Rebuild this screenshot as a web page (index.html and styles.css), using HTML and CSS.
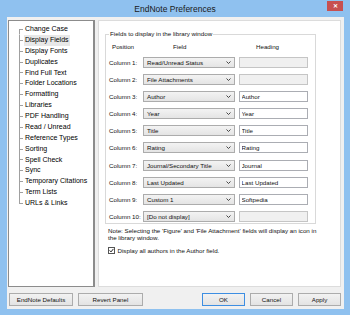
FILE: index.html
```html
<!DOCTYPE html>
<html lang="en">
<head>
    <meta charset="UTF-8">
    <meta name="viewport" content="width=device-width, initial-scale=1.0">
    <title>EndNote Preferences</title>
    <link rel="stylesheet" href="styles.css">
</head>
<body>

<div class="window">
    <div class="titlebar">
        <span></span>
        <span class="title">EndNote Preferences</span>
        <button class="close">&#x2715;</button>
    </div>

    <div class="client">
        <div class="main">
            <ul class="tree">
                <li><span>Change Case</span></li>
                <li class="sel"><span>Display Fields</span></li>
                <li><span>Display Fonts</span></li>
                <li><span>Duplicates</span></li>
                <li><span>Find Full Text</span></li>
                <li><span>Folder Locations</span></li>
                <li><span>Formatting</span></li>
                <li><span>Libraries</span></li>
                <li><span>PDF Handling</span></li>
                <li><span>Read / Unread</span></li>
                <li><span>Reference Types</span></li>
                <li><span>Sorting</span></li>
                <li><span>Spell Check</span></li>
                <li><span>Sync</span></li>
                <li><span>Temporary Citations</span></li>
                <li><span>Term Lists</span></li>
                <li><span>URLs &amp; Links</span></li>
            </ul>

            <div class="panel">
                <fieldset class="fields">
                    <legend>Fields to display in the library window</legend>
                    <div class="cols-head">
                        <span class="h-pos">Position</span>
                        <span class="h-field">Field</span>
                        <span class="h-head">Heading</span>
                    </div>
                    <div class="cols">
                        <span class="lbl">Column 1:</span>
                        <div class="select"><span>Read/Unread Status</span><svg width="5" height="3" viewBox="0 0 5 3"><polyline points="0.5,0.5 2.5,2.5 4.5,0.5" fill="none" stroke="#333" stroke-width="0.9"/></svg></div>
                        <input type="text" disabled>

                        <span class="lbl">Column 2:</span>
                        <div class="select"><span>File Attachments</span><svg width="5" height="3" viewBox="0 0 5 3"><polyline points="0.5,0.5 2.5,2.5 4.5,0.5" fill="none" stroke="#333" stroke-width="0.9"/></svg></div>
                        <input type="text" disabled>

                        <span class="lbl">Column 3:</span>
                        <div class="select"><span>Author</span><svg width="5" height="3" viewBox="0 0 5 3"><polyline points="0.5,0.5 2.5,2.5 4.5,0.5" fill="none" stroke="#333" stroke-width="0.9"/></svg></div>
                        <input type="text" value="Author">

                        <span class="lbl">Column 4:</span>
                        <div class="select"><span>Year</span><svg width="5" height="3" viewBox="0 0 5 3"><polyline points="0.5,0.5 2.5,2.5 4.5,0.5" fill="none" stroke="#333" stroke-width="0.9"/></svg></div>
                        <input type="text" value="Year">

                        <span class="lbl">Column 5:</span>
                        <div class="select"><span>Title</span><svg width="5" height="3" viewBox="0 0 5 3"><polyline points="0.5,0.5 2.5,2.5 4.5,0.5" fill="none" stroke="#333" stroke-width="0.9"/></svg></div>
                        <input type="text" value="Title">

                        <span class="lbl">Column 6:</span>
                        <div class="select"><span>Rating</span><svg width="5" height="3" viewBox="0 0 5 3"><polyline points="0.5,0.5 2.5,2.5 4.5,0.5" fill="none" stroke="#333" stroke-width="0.9"/></svg></div>
                        <input type="text" value="Rating">

                        <span class="lbl">Column 7:</span>
                        <div class="select"><span>Journal/Secondary Title</span><svg width="5" height="3" viewBox="0 0 5 3"><polyline points="0.5,0.5 2.5,2.5 4.5,0.5" fill="none" stroke="#333" stroke-width="0.9"/></svg></div>
                        <input type="text" value="Journal">

                        <span class="lbl">Column 8:</span>
                        <div class="select"><span>Last Updated</span><svg width="5" height="3" viewBox="0 0 5 3"><polyline points="0.5,0.5 2.5,2.5 4.5,0.5" fill="none" stroke="#333" stroke-width="0.9"/></svg></div>
                        <input type="text" value="Last Updated">

                        <span class="lbl">Column 9:</span>
                        <div class="select"><span>Custom 1</span><svg width="5" height="3" viewBox="0 0 5 3"><polyline points="0.5,0.5 2.5,2.5 4.5,0.5" fill="none" stroke="#333" stroke-width="0.9"/></svg></div>
                        <input type="text" value="Softpedia">

                        <span class="lbl">Column 10:</span>
                        <div class="select"><span>[Do not display]</span><svg width="5" height="3" viewBox="0 0 5 3"><polyline points="0.5,0.5 2.5,2.5 4.5,0.5" fill="none" stroke="#333" stroke-width="0.9"/></svg></div>
                        <input type="text" disabled>
                    </div>
                </fieldset>

                <p class="note">Note: Selecting the 'Figure' and 'File Attachment' fields will display an icon in the library window.</p>

                <label class="check">
                    <span class="box"><svg width="5" height="5" viewBox="0 0 5 5"><polyline points="0.6,2.4 2,3.9 4.4,0.9" fill="none" stroke="#222" stroke-width="1"/></svg></span>
                    Display all authors in the Author field.
                </label>
            </div>
        </div>

        <div class="buttons">
            <button class="btn-defaults">EndNote Defaults</button>
            <button class="btn-revert">Revert Panel</button>
            <span class="spacer"></span>
            <button class="btn default">OK</button>
            <button class="btn">Cancel</button>
            <button class="btn">Apply</button>
        </div>
    </div>
</div>

</body>
</html>
```

FILE: styles.css
```css
* {
    box-sizing: border-box;
}
body {
    margin: 0;
    font-family: "Liberation Sans", Arial, sans-serif;
    color: #111;
}
.window {
    width: 350px;
    height: 315px;
    background: #8fc1ef;
}

/* title bar */
.titlebar {
    height: 17px;
    display: grid;
    grid-template-columns: 1fr auto 1fr;
    grid-template-rows: 17px;
}
.title {
    font-size: 8.5px;
    line-height: 19px;
    color: #1a1a1a;
}
.close {
    justify-self: end;
    align-self: start;
    width: 16px;
    height: 10px;
    margin: 1px 7px 0 0;
    padding: 0;
    border: none;
    background: #c75050;
    color: #fff;
    font-size: 6px;
    line-height: 10px;
    font-weight: bold;
}

/* dialog body */
.client {
    margin: 0 6px 0 7px;
    height: 292px;
    background: #f0f0f0;
    padding: 3px 3px 0 1px;
}
.main {
    display: flex;
    gap: 3px;
    height: 267px;
}

/* left tree */
.tree {
    width: 87px;
    margin: 0;
    padding: 3px 0 0 10px;
    list-style: none;
    background: #fff;
    border: 1px solid #8c8c8c;
    border-right-width: 2px;
    font-size: 7px;
    line-height: 10.875px;
    color: #000;
}
.tree li {
    display: flex;
    align-items: center;
    background: linear-gradient(#a0a0a0, #a0a0a0) no-repeat 0 0 / 1px 100%;
}
.tree li:first-child {
    background-position: 0 100%;
    background-size: 1px 50%;
}
.tree li:last-child {
    background-size: 1px 50%;
}
.tree li::before {
    content: "";
    width: 4px;
    border-top: 1px solid #a0a0a0;
    margin-right: 1px;
}
.tree li span {
    padding: 0 1px;
}
.tree .sel span {
    background: #e8e8e8;
}

/* right panel */
.panel {
    flex: 1;
    background: #fff;
    border: 1px solid #dcdcdc;
    padding: 9px 0 0 6px;
    font-size: 6.2px;
    color: #111;
}
.fields {
    margin: 0;
    width: 211px;
    border: 1px solid #d9d9d9;
    padding: 5px 7px 1px 3px;
}
.fields legend {
    padding: 0 1px;
    line-height: 8px;
}
.cols-head,
.cols {
    display: grid;
    grid-template-columns: 30px 92px 69px;
    column-gap: 4px;
}
.cols-head {
    line-height: 8px;
    margin-bottom: 5.5px;
}
.h-pos {
    padding-left: 3px;
}
.h-field {
    padding-left: 30px;
}
.h-head {
    padding-left: 17px;
}
.cols {
    grid-auto-rows: 11px;
    row-gap: 6.2px;
    align-items: center;
}
.lbl {
    white-space: nowrap;
}
.select {
    height: 11px;
    display: flex;
    align-items: center;
    justify-content: space-between;
    padding: 0 3px 0 3px;
    border: 1px solid #acacac;
    background: linear-gradient(#f3f3f3, #e4e4e4);
    white-space: nowrap;
}
.cols input {
    width: 69px;
    height: 11px;
    margin: 0;
    padding: 0 1.5px;
    font: inherit;
    color: #111;
    border: 1px solid #abadb3;
    background: #fff;
}
.cols input:disabled {
    background: #f0f0f0;
    border-color: #c5c5c5;
}
.note {
    width: 214px;
    margin: 4px 0 0 3px;
    line-height: 6.7px;
}
.check {
    display: flex;
    align-items: center;
    gap: 2.5px;
    margin: 5.5px 0 0 3px;
}
.box {
    width: 7px;
    height: 7px;
    border: 1px solid #555;
    background: #fff;
    display: flex;
    align-items: center;
    justify-content: center;
}

/* bottom buttons */
.buttons {
    display: flex;
    gap: 5px;
    height: 13px;
    margin-top: 6px;
    padding-left: 1px;
}
.buttons button {
    height: 13px;
    padding: 0;
    font-family: inherit;
    font-size: 6.2px;
    color: #111;
    border: 1px solid #acacac;
    background: linear-gradient(#f2f2f2, #e3e3e3);
}
.btn-defaults {
    width: 64px;
}
.btn-revert {
    width: 65px;
}
.btn {
    width: 43px;
}
.buttons .default {
    border-color: #3d8ee2;
}
.spacer {
    flex: 1;
}
```
